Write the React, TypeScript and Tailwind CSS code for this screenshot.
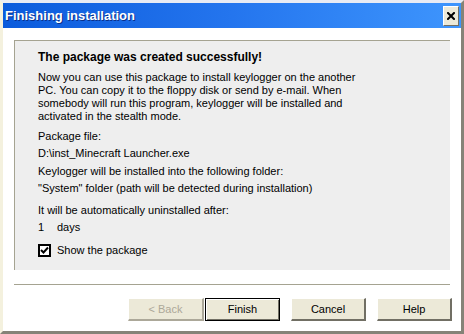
export default function App() {
  const font = { fontFamily: '"Liberation Sans", Arial, sans-serif' };

  return (
    <div
      className="w-[464px] h-[334px] flex flex-col bg-white border-t-[3px] border-t-[#e8ebf4] border-l-[3px] border-l-[#f4f1de] border-r-[3px] border-r-[#858378] border-b-[3px] border-b-[#858378] text-black"
      style={font}
    >
      {/* title bar */}
      <div className="h-[25px] shrink-0 flex items-center justify-between pl-[2px] pr-[2px] bg-gradient-to-r from-[#0a5bdc] via-[#2475ee] to-[#3e95fd]">
        <span className="text-white font-bold text-[13px] leading-none [text-shadow:1px_1px_0_#0a2f8a]">
          Finishing installation
        </span>
        <button className="w-[16px] h-[20px] flex items-center justify-center bg-[#ece9d8] border-t border-l border-t-white border-l-white border-r border-b border-r-[#716f64] border-b-[#716f64]">
          <svg width="8" height="8" viewBox="0 0 8 8">
            <path d="M1 1 L7 7 M7 1 L1 7" stroke="#000" strokeWidth="2" strokeLinecap="square" />
          </svg>
        </button>
      </div>

      {/* body */}
      <div className="flex-1 flex flex-col px-[11px] pt-[12px]">
        <div className="h-[230px] shrink-0 bg-[#eeeeee] border-t border-l border-[#a5a391] pl-[23px] pt-[10px] text-[11px] leading-[13px]">
          <div className="font-bold text-[12px]">The package was created successfully!</div>
          <div className="mt-[7px] w-[320px]">
            Now you can use this package to install keylogger on the another PC. You can copy it to the
            floppy disk or send by e-mail. When somebody will run this program, keylogger will be
            installed and activated in the stealth mode.
          </div>
          <div className="mt-[7px]">Package file:</div>
          <div className="mt-[4px]">D:\inst_Minecraft Launcher.exe</div>
          <div className="mt-[5px]">Keylogger will be installed into the following folder:</div>
          <div className="mt-[4px]">"System" folder (path will be detected during installation)</div>
          <div className="mt-[9px]">It will be automatically uninstalled after:</div>
          <div className="mt-[4px] flex">
            <span className="w-[19px]">1</span>
            <span>days</span>
          </div>
          <div className="mt-[10px] flex items-center h-[13px]">
            <span className="w-[13px] h-[13px] border-2 border-black bg-white flex items-center justify-center">
              <svg width="9" height="9" viewBox="0 0 9 9">
                <path d="M1 4 L3.5 6.5 L8 1.5" stroke="#000" strokeWidth="2" fill="none" />
              </svg>
            </span>
            <span className="ml-[6px]">Show the package</span>
          </div>
        </div>

        <div className="mt-[14px] h-px bg-[#a5a391]" />

        <div className="mt-[13px] flex text-[11px]">
          <button className="ml-[114px] shrink-0 w-[76px] h-[23px] bg-[#ece9d8] text-[#aca899] border-t border-l border-t-white border-l-white border-r-2 border-b-2 border-r-[#aca899] border-b-[#aca899]">
            &lt; Back
          </button>
          <button className="ml-[1px] shrink-0 w-[75px] h-[23px] bg-[#ece9d8] border border-black shadow-[inset_1px_1px_0_#fff,inset_-1px_-1px_0_#716f64]">
            Finish
          </button>
          <button className="ml-[11px] shrink-0 w-[75px] h-[23px] bg-[#ece9d8] border-t border-l border-t-white border-l-white border-r-2 border-b-2 border-r-[#716f64] border-b-[#716f64]">
            Cancel
          </button>
          <button className="ml-[11px] shrink-0 w-[75px] h-[23px] bg-[#ece9d8] border-t border-l border-t-white border-l-white border-r-2 border-b-2 border-r-[#716f64] border-b-[#716f64]">
            Help
          </button>
        </div>
      </div>
    </div>
  );
}
